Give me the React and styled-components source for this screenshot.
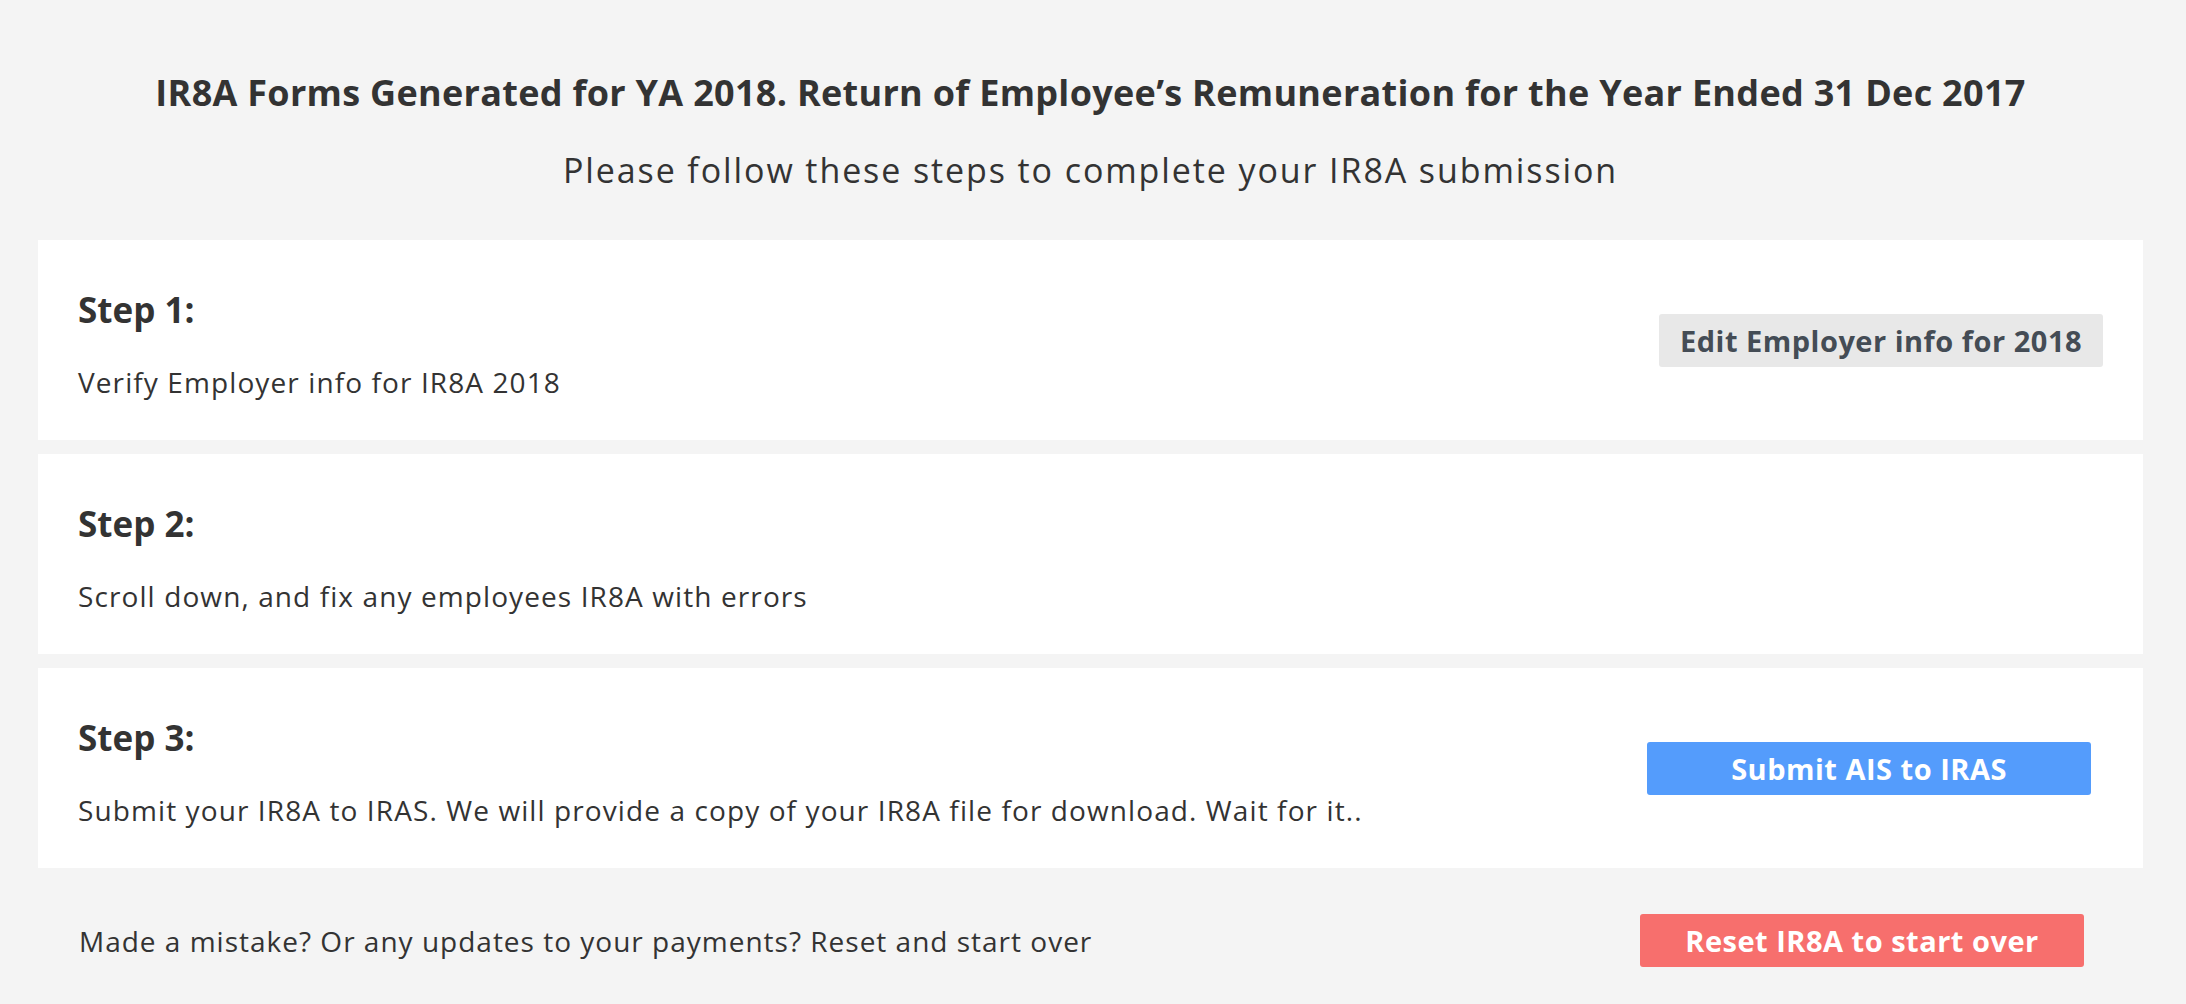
import React from "react";
import styled, { createGlobalStyle } from "styled-components";

const GlobalStyle = createGlobalStyle`
  html, body {
    margin: 0;
    padding: 0;
    background: #f4f4f4;
  }
  body {
    font-family: "Open Sans", "Noto Sans", sans-serif;
    color: #333333;
  }
`;

const steps = [
  {
    label: "Step 1:",
    text: "Verify Employer info for IR8A 2018",
    action: { label: "Edit Employer info for 2018", kind: "light", right: 40 },
  },
  {
    label: "Step 2:",
    text: "Scroll down, and fix any employees IR8A with errors",
  },
  {
    label: "Step 3:",
    text:
      "Submit your IR8A to IRAS. We will provide a copy of your IR8A file for download. Wait for it..",
    action: { label: "Submit AIS to IRAS", kind: "primary", right: 52 },
  },
];

export default function App() {
  return (
    <>
      <GlobalStyle />
      <StyledPage>
        <StyledHeader>
          <StyledTitle>
            IR8A Forms Generated for YA 2018. Return of Employee’s Remuneration
            for the Year Ended 31 Dec 2017
          </StyledTitle>
          <StyledSubtitle>
            Please follow these steps to complete your IR8A submission
          </StyledSubtitle>
        </StyledHeader>

        <StyledStepList>
          {steps.map((step) => (
            <StyledStepCard key={step.label}>
              <StyledStepBody>
                <StyledStepHeading>{step.label}</StyledStepHeading>
                <StyledStepText>{step.text}</StyledStepText>
              </StyledStepBody>
              {step.action && (
                <StyledButton kind={step.action.kind} right={step.action.right}>
                  {step.action.label}
                </StyledButton>
              )}
            </StyledStepCard>
          ))}
        </StyledStepList>

        <StyledFooterRow>
          <StyledFooterText>
            Made a mistake? Or any updates to your payments? Reset and start over
          </StyledFooterText>
          <StyledButton kind="danger" right={59}>
            Reset IR8A to start over
          </StyledButton>
        </StyledFooterRow>
      </StyledPage>
    </>
  );
}

const buttonColors = {
  light: { bg: "#e8e8e8", fg: "#444c55" },
  primary: { bg: "#549cfc", fg: "#ffffff" },
  danger: { bg: "#f76f6d", fg: "#ffffff" },
};

const StyledPage = styled.div`
  padding: 71px 43px 0 38px;
`;

const StyledHeader = styled.header`
  display: flex;
  flex-direction: column;
  align-items: center;
  gap: 33px;
  margin-bottom: 48px;
  text-align: center;
`;

const StyledTitle = styled.h1`
  margin: 0;
  font-size: 36px;
  line-height: 44px;
  font-weight: 700;
  letter-spacing: 0.3px;
  color: #333333;
`;

const StyledSubtitle = styled.p`
  margin: 0;
  font-size: 34px;
  line-height: 44px;
  font-weight: 400;
  letter-spacing: 1.9px;
  color: #333333;
`;

const StyledStepList = styled.div`
  display: flex;
  flex-direction: column;
  gap: 14px;
`;

const StyledStepCard = styled.section`
  display: flex;
  align-items: center;
  justify-content: space-between;
  height: 200px;
  box-sizing: border-box;
  padding: 0 0 0 40px;
  background: #ffffff;
`;

const StyledStepBody = styled.div`
  padding-top: 10px;
`;

const StyledStepHeading = styled.h3`
  margin: 0 0 30px;
  font-size: 35px;
  line-height: 44px;
  font-weight: 700;
  color: #333333;
`;

const StyledStepText = styled.p`
  margin: 0;
  font-size: 28px;
  line-height: 40px;
  letter-spacing: 1.1px;
  color: #333333;
`;

const StyledButton = styled.button`
  flex: none;
  width: 444px;
  height: 53px;
  margin-right: ${(p) => p.right}px;
  border: none;
  border-radius: 3px;
  background: ${(p) => buttonColors[p.kind].bg};
  color: ${(p) => buttonColors[p.kind].fg};
  font-family: "Open Sans", "Noto Sans", sans-serif;
  font-size: 29px;
  font-weight: 700;
  letter-spacing: 0.5px;
  cursor: pointer;
`;

const StyledFooterRow = styled.div`
  display: flex;
  align-items: center;
  justify-content: space-between;
  padding: 46px 0 0 41px;
`;

const StyledFooterText = styled.p`
  margin: 0;
  font-size: 28px;
  line-height: 40px;
  letter-spacing: 1px;
  color: #333333;
`;
